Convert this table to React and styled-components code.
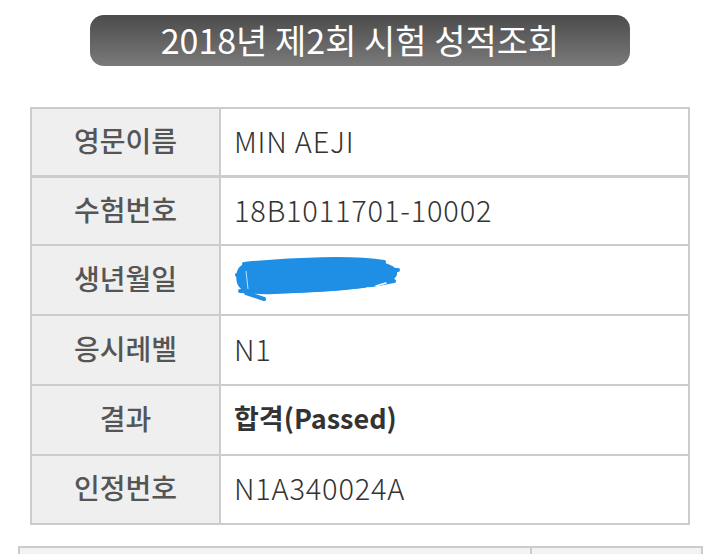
import React from "react";
import styled, { createGlobalStyle } from "styled-components";

const Global = createGlobalStyle`
  html, body { margin: 0; padding: 0; background: #fff; }
  body { font-family: "Noto Sans CJK KR", "Noto Sans", sans-serif; }
`;

const Page = styled.div`
  width: 720px;
  height: 554px;
  overflow: hidden;
  display: flex;
  flex-direction: column;
  align-items: center;
  padding-top: 15px;
  box-sizing: border-box;
  & > * { flex-shrink: 0; }
`;

const Title = styled.div`
  width: 540px;
  height: 51px;
  border-radius: 14px;
  background: linear-gradient(#4b4b4b, #7a7a7a);
  color: #fff;
  font-size: 34px;
  padding-bottom: 2px;
  box-sizing: border-box;
  display: flex;
  align-items: center;
  justify-content: center;
`;

const Table = styled.div`
  margin-top: 41px;
  width: 660px;
  box-sizing: border-box;
  border: 2px solid #cccccc;
  display: grid;
  grid-template-columns: 189px 1fr;
`;

const Cell = styled.div`
  height: ${(p) => p.$h}px;
  border-bottom: ${(p) => (p.$last ? 0 : p.$thick ? 3 : 2)}px solid #cccccc;
  display: flex;
  align-items: center;
  padding-bottom: 5px;
  box-sizing: content-box;
`;

const Label = styled(Cell)`
  background: #efefef;
  border-right: 2px solid #cccccc;
  justify-content: center;
  font-size: 28px;
  font-weight: 500;
  color: #555;
`;

const Value = styled(Cell)`
  padding-left: 13px;
  font-size: ${(p) => (p.$bold ? 27 : 29)}px;
  letter-spacing: ${(p) => (p.$bold ? 0 : 0.8)}px;
  color: #333;
  font-weight: ${(p) => (p.$bold ? 700 : 300)};
`;

const Lower = styled.div`
  margin-top: 21px;
  width: 685px;
  height: 20px;
  box-sizing: border-box;
  border: 2px solid #cccccc;
  border-bottom: 0;
  display: grid;
  grid-template-columns: 512px 1fr;
  background: #f3f3f3;
`;

const LowerCell = styled.div`
  border-right: ${(p) => (p.$divider ? "2px solid #cccccc" : "0")};
`;

const Scribble = () => (
  <svg width="170" height="46" viewBox="0 0 170 46">
    <path
      d="M8 10 C40 6 80 3 120 5 C140 5 156 7 162 14 C166 20 160 26 150 30 C120 35 80 37 40 39 C20 40 6 38 3 28 C1 20 3 13 8 10 Z"
      fill="#1f8fe6"
    />
    <path
      d="M10 9 C60 4 120 2 150 7 M3 20 C40 16 120 13 164 15 M6 36 C60 38 120 34 160 26 M12 38 L30 44"
      stroke="#1f8fe6"
      strokeWidth="4"
      fill="none"
      strokeLinecap="round"
    />
    <path d="M122 36 L134 33 M142 31 L152 28" stroke="#fff" strokeWidth="1.5" strokeLinecap="round" />
    <path d="M12 16 L14 34" stroke="#bfe0fa" strokeWidth="1" />
  </svg>
);

const rows = [
  { label: "영문이름", value: "MIN AEJI", h: 61, thick: true },
  { label: "수험번호", value: "18B1011701-10002", h: 61 },
  { label: "생년월일", value: <Scribble />, h: 63 },
  { label: "응시레벨", value: "N1", h: 63 },
  { label: "결과", value: "합격(Passed)", h: 63, bold: true },
  { label: "인정번호", value: "N1A340024A", h: 62, last: true },
];

export default function App() {
  return (
    <Page>
      <Global />
      <Title>2018년 제2회 시험 성적조회</Title>
      <Table>
        {rows.map((r) => (
          <React.Fragment key={r.label}>
            <Label $h={r.h} $thick={r.thick} $last={r.last}>
              {r.label}
            </Label>
            <Value $h={r.h} $thick={r.thick} $last={r.last} $bold={r.bold}>
              {r.value}
            </Value>
          </React.Fragment>
        ))}
      </Table>
      <Lower>
        <LowerCell $divider />
        <LowerCell />
      </Lower>
    </Page>
  );
}
